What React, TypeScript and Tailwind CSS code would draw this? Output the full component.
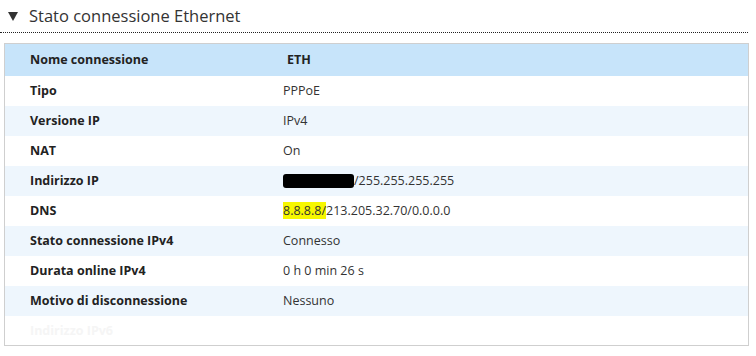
const rows: { label: string; value: React.ReactNode }[] = [
  { label: 'Tipo', value: 'PPPoE' },
  { label: 'Versione IP', value: 'IPv4' },
  { label: 'NAT', value: 'On' },
  {
    label: 'Indirizzo IP',
    value: (
      <span className="flex items-center">
        <span className="inline-block h-[14px] w-[71px] rounded-[3px] bg-black" />
        <span>/255.255.255.255</span>
      </span>
    ),
  },
  {
    label: 'DNS',
    value: (
      <span>
        <span className="bg-[#f7f700]">8.8.8.8/</span>213.205.32.70/0.0.0.0
      </span>
    ),
  },
  { label: 'Stato connessione IPv4', value: 'Connesso' },
  { label: 'Durata online IPv4', value: '0 h 0 min 26 s' },
  { label: 'Motivo di disconnessione', value: 'Nessuno' },
];

export default function App() {
  return (
    <div
      className="h-[356px] w-[756px] overflow-hidden bg-white text-[#333]"
      style={{ fontFamily: '"Open Sans", "Noto Sans", sans-serif' }}
    >
      <div className="flex h-[32px] items-center pl-[8px] pt-[1px]">
        <svg width="10" height="9" viewBox="0 0 10 9" className="mr-[11px]">
          <path d="M0 0 L10 0 L5 9 Z" fill="#333" />
        </svg>
        <span className="text-[16.5px] leading-none text-[#333]">Stato connessione Ethernet</span>
      </div>
      <div className="ml-0 mr-[8px] border-t border-dotted border-[#222]" />
      <div className="ml-[4px] mr-[7px] mt-[10px] h-[303px] overflow-hidden border border-[#cfcfcf]">
        <div className="flex h-[32px] items-center bg-[#c7e4fa] text-[12.5px] font-bold text-[#222]">
          <div className="w-[278px] pl-[25px]">Nome connessione</div>
          <div className="pl-[4px]">ETH</div>
        </div>
        {rows.map((r, i) => (
          <div
            key={r.label}
            className={`flex h-[30px] items-center text-[12.5px] ${i % 2 === 1 ? 'bg-[#eef6fd]' : 'bg-white'}`}
          >
            <div className="w-[278px] pl-[25px] font-bold text-[#222]">{r.label}</div>
            <div className="text-[#333]">{r.value}</div>
          </div>
        ))}
        <div className="flex h-[30px] items-center text-[12.5px]">
          <div className="w-[278px] pl-[25px] font-bold text-[#f5f5f5]">Indirizzo IPv6</div>
        </div>
      </div>
    </div>
  );
}
